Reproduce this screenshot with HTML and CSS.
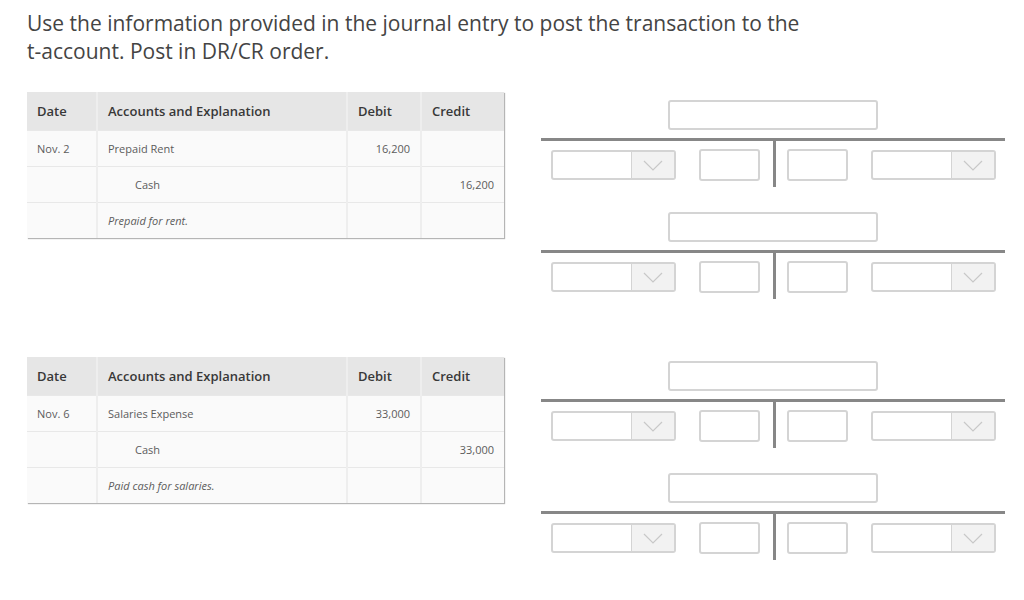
FILE: index.html
```html
<!DOCTYPE html>
<html lang="en">
<head>
    <meta charset="UTF-8">
    <meta name="viewport" content="width=device-width, initial-scale=1.0">
    <title>Post to T-accounts</title>
    <link rel="stylesheet" href="styles.css">
</head>
<body>
    <p class="prompt">Use the information provided in the journal entry to post the transaction to the t-account. Post in DR/CR order.</p>

    <div class="entry entry-first">
        <table class="journal">
            <thead>
                <tr>
                    <th class="col-date">Date</th>
                    <th class="col-acct">Accounts and Explanation</th>
                    <th class="col-debit">Debit</th>
                    <th class="col-credit">Credit</th>
                </tr>
            </thead>
            <tbody>
                <tr>
                    <td>Nov. 2</td>
                    <td>Prepaid Rent</td>
                    <td class="num">16,200</td>
                    <td></td>
                </tr>
                <tr>
                    <td></td>
                    <td class="indent">Cash</td>
                    <td></td>
                    <td class="num">16,200</td>
                </tr>
                <tr>
                    <td></td>
                    <td class="memo">Prepaid for rent.</td>
                    <td></td>
                    <td></td>
                </tr>
            </tbody>
        </table>

        <div class="accounts">
            <div class="taccount">
                <div class="t-title"></div>
                <div class="t-body">
                    <div class="t-side t-left">
                        <div class="pick"><span class="pick-btn"><svg width="20" height="11" viewBox="0 0 20 11"><path d="M1 1 L10 10 L19 1" fill="none" stroke="#c8c8c8" stroke-width="1.2"/></svg></span></div>
                        <div class="amount"></div>
                    </div>
                    <div class="t-side t-right">
                        <div class="amount"></div>
                        <div class="pick"><span class="pick-btn"><svg width="20" height="11" viewBox="0 0 20 11"><path d="M1 1 L10 10 L19 1" fill="none" stroke="#c8c8c8" stroke-width="1.2"/></svg></span></div>
                    </div>
                </div>
            </div>
            <div class="taccount">
                <div class="t-title"></div>
                <div class="t-body">
                    <div class="t-side t-left">
                        <div class="pick"><span class="pick-btn"><svg width="20" height="11" viewBox="0 0 20 11"><path d="M1 1 L10 10 L19 1" fill="none" stroke="#c8c8c8" stroke-width="1.2"/></svg></span></div>
                        <div class="amount"></div>
                    </div>
                    <div class="t-side t-right">
                        <div class="amount"></div>
                        <div class="pick"><span class="pick-btn"><svg width="20" height="11" viewBox="0 0 20 11"><path d="M1 1 L10 10 L19 1" fill="none" stroke="#c8c8c8" stroke-width="1.2"/></svg></span></div>
                    </div>
                </div>
            </div>
        </div>
    </div>

    <div class="entry entry-second">
        <table class="journal">
            <thead>
                <tr>
                    <th class="col-date">Date</th>
                    <th class="col-acct">Accounts and Explanation</th>
                    <th class="col-debit">Debit</th>
                    <th class="col-credit">Credit</th>
                </tr>
            </thead>
            <tbody>
                <tr>
                    <td>Nov. 6</td>
                    <td>Salaries Expense</td>
                    <td class="num">33,000</td>
                    <td></td>
                </tr>
                <tr>
                    <td></td>
                    <td class="indent">Cash</td>
                    <td></td>
                    <td class="num">33,000</td>
                </tr>
                <tr>
                    <td></td>
                    <td class="memo">Paid cash for salaries.</td>
                    <td></td>
                    <td></td>
                </tr>
            </tbody>
        </table>

        <div class="accounts">
            <div class="taccount">
                <div class="t-title"></div>
                <div class="t-body">
                    <div class="t-side t-left">
                        <div class="pick"><span class="pick-btn"><svg width="20" height="11" viewBox="0 0 20 11"><path d="M1 1 L10 10 L19 1" fill="none" stroke="#c8c8c8" stroke-width="1.2"/></svg></span></div>
                        <div class="amount"></div>
                    </div>
                    <div class="t-side t-right">
                        <div class="amount"></div>
                        <div class="pick"><span class="pick-btn"><svg width="20" height="11" viewBox="0 0 20 11"><path d="M1 1 L10 10 L19 1" fill="none" stroke="#c8c8c8" stroke-width="1.2"/></svg></span></div>
                    </div>
                </div>
            </div>
            <div class="taccount">
                <div class="t-title"></div>
                <div class="t-body">
                    <div class="t-side t-left">
                        <div class="pick"><span class="pick-btn"><svg width="20" height="11" viewBox="0 0 20 11"><path d="M1 1 L10 10 L19 1" fill="none" stroke="#c8c8c8" stroke-width="1.2"/></svg></span></div>
                        <div class="amount"></div>
                    </div>
                    <div class="t-side t-right">
                        <div class="amount"></div>
                        <div class="pick"><span class="pick-btn"><svg width="20" height="11" viewBox="0 0 20 11"><path d="M1 1 L10 10 L19 1" fill="none" stroke="#c8c8c8" stroke-width="1.2"/></svg></span></div>
                    </div>
                </div>
            </div>
        </div>
    </div>
</body>
</html>
```

FILE: styles.css
```css
body {
    font-family: 'Open Sans', 'Liberation Sans', sans-serif;
    background: #fff;
    color: #444;
    margin: 0;
    padding: 0 0 0 27px;
}
.prompt {
    font-size: 21px;
    line-height: 28px;
    margin: 9px 0 0;
    width: 780px;
    color: #444;
}
.entry {
    display: flex;
    align-items: flex-start;
    gap: 37px;
}
.entry-first {
    margin-top: 27px;
}
.entry-second {
    margin-top: 33px;
}
.journal {
    width: 477px;
    border-collapse: collapse;
    table-layout: fixed;
    font-size: 11px;
    color: #5c5c5c;
    box-shadow: 1px 1px 1px #b5b5b5;
}
.journal th {
    box-sizing: border-box;
    background: #e6e6e6;
    color: #383838;
    font-size: 13px;
    font-weight: 600;
    text-align: left;
    height: 38px;
    padding: 0 10px;
    border-right: 2px solid #eeeeee;
}
.journal td {
    background: #fafafa;
    height: 35px;
    padding: 0 10px;
    border-top: 1px solid #e8e8e8;
    border-right: 2px solid #eeeeee;
}
.journal th:last-child,
.journal td:last-child {
    border-right: none;
}
.col-date { width: 70px; }
.col-debit { width: 74px; }
.col-credit { width: 83px; }
.journal td.num {
    text-align: right;
}
.journal td.indent {
    padding-left: 37px;
}
.journal td.memo {
    font-style: italic;
}
.accounts {
    width: 464px;
    padding-top: 8px;
}
.entry-second .accounts {
    padding-top: 4px;
}
.taccount {
    margin-bottom: 25px;
}
.t-title {
    width: 206px;
    height: 26px;
    margin: 0 auto;
    border: 2px solid #d4d4d4;
    border-radius: 3px;
}
.t-body {
    display: flex;
    margin-top: 8px;
    border-top: 3px solid #878787;
}
.t-side {
    flex: 1;
    height: 38px;
    padding-top: 8px;
    display: flex;
    justify-content: space-between;
    align-items: flex-start;
}
.t-left {
    padding-left: 10px;
    padding-right: 13px;
}
.t-right {
    border-left: 3px solid #878787;
    padding-left: 11px;
    padding-right: 9px;
}
.pick {
    width: 121px;
    height: 26px;
    margin-top: 1px;
    border: 2px solid #d4d4d4;
    border-radius: 3px;
    display: flex;
    justify-content: flex-end;
}
.pick-btn {
    width: 42px;
    background: #f2f2f2;
    border-left: 1px solid #d4d4d4;
    display: flex;
    align-items: center;
    justify-content: center;
}
.amount {
    width: 57px;
    height: 28px;
    border: 2px solid #d4d4d4;
    border-radius: 3px;
}
```
